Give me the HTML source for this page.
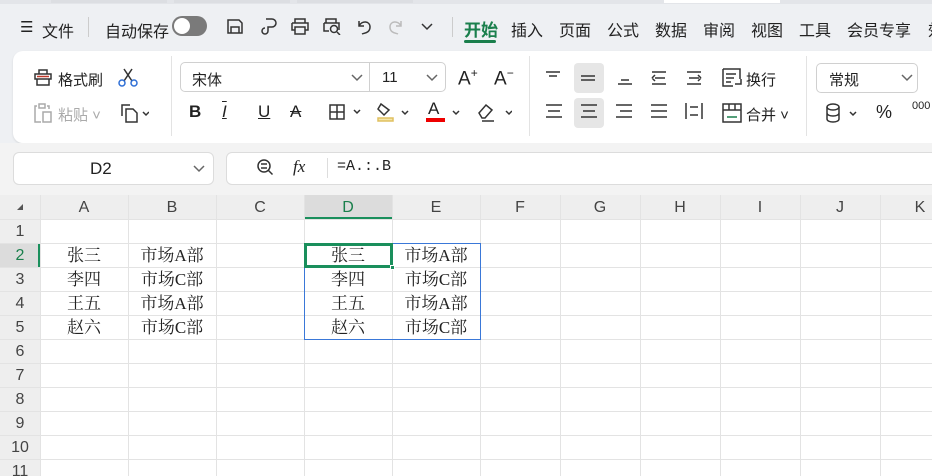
<!DOCTYPE html>
<html><head><meta charset="utf-8"><style>
*{box-sizing:border-box;margin:0;padding:0}
html,body{width:932px;height:476px;overflow:hidden}
body{background:#eef0f3;font-family:"Liberation Sans","Noto Sans CJK SC",sans-serif;position:relative;color:#222}
.a{position:absolute;white-space:nowrap}
.t{font-size:15px}
.ic{position:absolute;stroke:#333;fill:none;stroke-width:1.5}
.g{position:absolute;background:#e3e3e3}
.hd{position:absolute;top:195px;height:24px;line-height:25px;text-align:center;font-size:16px;color:#444}
.rh{position:absolute;left:0;width:40px;height:24px;line-height:25px;text-align:center;font-size:16px;color:#444}
.c{position:absolute;height:24px;line-height:25px;text-align:center;font-size:17px;font-family:"Liberation Serif","Noto Serif CJK SC",serif;color:#222}
</style></head><body>
<div class="a" style="left:0;top:0;width:932px;height:4px;background:#e3e5e9"></div>
<div class="a" style="left:51px;top:0;width:116px;height:3px;background:#dcdee2"></div>
<div class="a" style="left:174px;top:0;width:116px;height:3px;background:#dcdee2"></div>
<div class="a" style="left:297px;top:0;width:116px;height:3px;background:#dcdee2"></div>
<div class="a" style="left:664px;top:0;width:116px;height:3px;background:#fff"></div>
<div class="a t" style="left:20px;top:18px">☰</div>
<div class="a" style="left:42px;top:18px;font-size:16px">文件</div>
<div class="a" style="left:88px;top:17px;width:1px;height:20px;background:#ccc"></div>
<div class="a" style="left:105px;top:18px;font-size:16px">自动保存</div>
<div class="a" style="left:172px;top:16px;width:35px;height:20px;border-radius:10px;background:#7a7a7a"></div>
<div class="a" style="left:174px;top:18px;width:16px;height:16px;border-radius:8px;background:#fff"></div>
<svg class="ic" style="left:226px;top:17px" width="18" height="18"><path d="M2 3h11l3 3v10H2z M5 10h8v6H5z"/></svg>
<svg class="ic" style="left:260px;top:17px" width="18" height="18"><path d="M6 2h6a4 4 0 0 1 0 8H8v4a3 3 0 1 1-3-3"/></svg>
<svg class="ic" style="left:290px;top:17px" width="20" height="18"><path d="M5 6V2h10v4 M2 6h16v7h-3 M5 13H2V6 M5 10h10v7H5z"/></svg>
<svg class="ic" style="left:322px;top:17px" width="20" height="18"><path d="M4 6V2h10v4 M2 6h15v7 M2 6v8h5"/><circle cx="12" cy="12" r="3.5"/><path d="M15 15l3 3"/></svg>
<svg class="ic" style="left:356px;top:17px" width="16" height="18"><path d="M3 4v5h5 M3 9c3-6 11-5 11 1s-6 6-8 7"/></svg>
<svg class="ic" style="left:388px;top:17px;stroke:#bbb" width="16" height="18"><path d="M13 4v5H8 M13 9c-3-6-11-5-11 1s6 6 8 7"/></svg>
<svg class="ic" style="left:420px;top:22px" width="14" height="10"><path d="M2 2l5 5 5-5"/></svg>
<div class="a" style="left:452px;top:17px;width:1px;height:20px;background:#ccc"></div>
<div class="a" style="left:464px;top:16px;font-size:17px;font-weight:bold;color:#1a7f4c">开始</div>
<div class="a" style="left:464px;top:40px;width:32px;height:3px;background:#1a7f4c;border-radius:2px"></div>
<div class="a" style="left:511px;top:17px;font-size:16px">插入</div>
<div class="a" style="left:559px;top:17px;font-size:16px">页面</div>
<div class="a" style="left:607px;top:17px;font-size:16px">公式</div>
<div class="a" style="left:655px;top:17px;font-size:16px">数据</div>
<div class="a" style="left:703px;top:17px;font-size:16px">审阅</div>
<div class="a" style="left:751px;top:17px;font-size:16px">视图</div>
<div class="a" style="left:799px;top:17px;font-size:16px">工具</div>
<div class="a" style="left:847px;top:17px;font-size:16px">会员专享</div>
<div class="a" style="left:928px;top:17px;font-size:16px">效</div>
<div class="a" style="left:13px;top:51px;width:930px;height:92px;background:#fff;border-radius:10px;box-shadow:0 1px 2px rgba(0,0,0,.1)"></div>
<svg class="ic" style="left:33px;top:67px" width="20" height="20"><path d="M2 7h16v5H2z M6 7V3h8v4 M4 12v6h12v-6"/><path d="M4 9.5h12" stroke="#c0392b"/></svg>
<div class="a t" style="left:58px;top:69px">格式刷</div>
<svg class="ic" style="left:117px;top:66px;stroke:#2f6fd6" width="22" height="22"><path d="M7 3l8 12 M15 3L7 15" stroke="#333"/><circle cx="5" cy="17" r="3"/><circle cx="17" cy="17" r="3"/></svg>
<svg class="ic" style="left:33px;top:102px;stroke:#aaa" width="20" height="22"><path d="M4 4H2v16h6 M14 4h2v3 M6 2h6v4H6z M10 10h8v10h-8z"/></svg>
<div class="a t" style="left:58px;top:104px;color:#aaa">粘贴 ˅</div>
<svg class="ic" style="left:119px;top:102px" width="30" height="22"><path d="M3 14V3h8 M7 7h7l4 4v9H7z"/><path d="M24 10l3 3 3-3"/></svg>
<div class="a" style="left:171px;top:56px;width:1px;height:80px;background:#e3e3e3"></div>
<div class="a" style="left:180px;top:62px;width:266px;height:30px;border:1px solid #d0d0d0;border-radius:5px"></div>
<div class="a" style="left:369px;top:63px;width:1px;height:28px;background:#d0d0d0"></div>
<div class="a t" style="left:192px;top:69px">宋体</div>
<svg class="ic" style="left:350px;top:73px;stroke:#666" width="14" height="10"><path d="M2 2l5 5 5-5"/></svg>
<div class="a t" style="left:382px;top:69px">11</div>
<svg class="ic" style="left:425px;top:73px;stroke:#666" width="14" height="10"><path d="M2 2l5 5 5-5"/></svg>
<div class="a" style="left:458px;top:66px;font-size:19px">A<sup style="font-size:12px">+</sup></div>
<div class="a" style="left:494px;top:66px;font-size:19px">A<sup style="font-size:12px">−</sup></div>
<div class="a" style="left:189px;top:102px;font-size:17px;font-weight:bold">B</div>
<div class="a" style="left:222px;top:102px;font-size:17px;font-style:italic;text-decoration:underline overline">I</div>
<div class="a" style="left:258px;top:102px;font-size:17px;text-decoration:underline">U</div>
<div class="a" style="left:290px;top:102px;font-size:17px;text-decoration:line-through">A</div>
<svg class="ic" style="left:328px;top:103px" width="34" height="18"><path d="M2 2h14v14H2z M9 2v14 M2 9h14"/><path d="M26 7l3 3 3-3"/></svg>
<svg class="ic" style="left:376px;top:101px" width="36" height="22"><path d="M5 3l8 6-5 5-6-6z"/><path d="M2 17h15v3H2z" fill="#f5e6a8" stroke="#e0c060"/><path d="M26 10l3 3 3-3"/></svg>
<div class="a" style="left:428px;top:99px;font-size:17px">A</div>
<div class="a" style="left:426px;top:118px;width:19px;height:4px;background:#e00"></div>
<svg class="ic" style="left:452px;top:110px" width="10" height="8"><path d="M1 1l3 3 3-3"/></svg>
<svg class="ic" style="left:476px;top:101px" width="36" height="22"><path d="M3 12l7-8 6 5-7 8H6z M6 20h12"/><path d="M30 10l3 3 3-3"/></svg>
<div class="a" style="left:529px;top:56px;width:1px;height:80px;background:#e3e3e3"></div>
<div class="a" style="left:574px;top:63px;width:30px;height:30px;background:#e6e6e6;border-radius:4px"></div>
<div class="a" style="left:574px;top:98px;width:30px;height:30px;background:#e6e6e6;border-radius:4px"></div>
<svg class="ic" style="left:544px;top:68px" width="200" height="60"><path d="M2 4h14 M5 8h8 M37 8h14 M37 12h14 M74 16h14 M77 12h8 M108 4h14 M108 16h14 M111 10h10 M108 10l3-3 M108 10l3 3 M143 4h14 M143 16h14 M145 10h10 M157 10l-3-3 M157 10l-3 3"/><path d="M2 37h16 M4 43h12 M2 49h16 M37 37h16 M39 43h12 M37 49h16 M72 37h16 M76 43h12 M72 49h16 M107 37h16 M107 43h16 M107 49h16 M142 35v16 M158 35v16 M146 39h8 M146 47h8"/></svg>
<svg class="ic" style="left:721px;top:67px" width="22" height="22"><path d="M2 2h17v10 M2 2v17h10 M5 7h10 M5 11h8 M5 15h5 M14 17h6v-5" /></svg>
<div class="a t" style="left:746px;top:69px">换行</div>
<svg class="ic" style="left:721px;top:102px" width="22" height="22"><path d="M2 2h18v18H2z M2 8h18 M8 2v6 M14 2v6"/><path d="M6 15h10" stroke="#1a7f4c"/></svg>
<div class="a t" style="left:746px;top:104px">合并 ˅</div>
<div class="a" style="left:806px;top:56px;width:1px;height:80px;background:#e3e3e3"></div>
<div class="a" style="left:816px;top:63px;width:102px;height:30px;border:1px solid #d0d0d0;border-radius:5px"></div>
<div class="a t" style="left:829px;top:69px">常规</div>
<svg class="ic" style="left:900px;top:73px;stroke:#666" width="14" height="10"><path d="M2 2l5 5 5-5"/></svg>
<svg class="ic" style="left:824px;top:102px" width="36" height="22"><ellipse cx="9" cy="5" rx="6" ry="3"/><path d="M3 5v12c0 4 12 4 12 0V5 M3 11c0 4 12 4 12 0"/><path d="M26 10l3 3 3-3"/></svg>
<div class="a" style="left:876px;top:102px;font-size:18px">%</div>
<div class="a" style="left:912px;top:100px;font-size:11px">000</div>
<div class="a" style="left:0;top:143px;width:932px;height:52px;background:#f3f3f3"></div>
<div class="a" style="left:13px;top:152px;width:201px;height:33px;background:#fff;border:1px solid #dcdcdc;border-radius:6px"></div>
<div class="a" style="left:90px;top:159px;font-size:17px">D2</div>
<svg class="ic" style="left:192px;top:164px;stroke:#666" width="14" height="10"><path d="M2 2l5 5 5-5"/></svg>
<div class="a" style="left:226px;top:152px;width:720px;height:33px;background:#fff;border:1px solid #dcdcdc;border-radius:6px"></div>
<svg class="ic" style="left:256px;top:158px" width="20" height="20"><circle cx="8" cy="8" r="6"/><path d="M12.5 12.5l4 4 M5 6h6 M5 10h6"/></svg>
<div class="a" style="left:293px;top:157px;font-size:17px;font-style:italic;font-family:'Liberation Serif',serif">fx</div>
<div class="a" style="left:327px;top:158px;width:1px;height:20px;background:#ddd"></div>
<div class="a" style="left:337px;top:158px;font-size:15px;font-family:'Liberation Mono',monospace">=A.:.B</div>
<div class="a" style="left:0;top:195px;width:932px;height:281px;background:#fff"></div>
<div class="a" style="left:0;top:195px;width:932px;height:24px;background:#eeeeee"></div>
<div class="a" style="left:0;top:195px;width:40px;height:281px;background:#eeeeee"></div>
<div class="a" style="left:304px;top:195px;width:88px;height:24px;background:#dcdcdc;border-bottom:2px solid #1a8f5c"></div>
<div class="a" style="left:0;top:243px;width:40px;height:24px;background:#dcdcdc;border-right:2px solid #1a8f5c"></div>
<div class="g" style="left:40px;top:195px;width:1px;height:281px"></div>
<div class="g" style="left:128px;top:195px;width:1px;height:281px"></div>
<div class="g" style="left:216px;top:195px;width:1px;height:281px"></div>
<div class="g" style="left:304px;top:195px;width:1px;height:281px"></div>
<div class="g" style="left:392px;top:195px;width:1px;height:281px"></div>
<div class="g" style="left:480px;top:195px;width:1px;height:281px"></div>
<div class="g" style="left:560px;top:195px;width:1px;height:281px"></div>
<div class="g" style="left:640px;top:195px;width:1px;height:281px"></div>
<div class="g" style="left:720px;top:195px;width:1px;height:281px"></div>
<div class="g" style="left:800px;top:195px;width:1px;height:281px"></div>
<div class="g" style="left:880px;top:195px;width:1px;height:281px"></div>
<div class="g" style="left:0;top:219px;width:932px;height:1px"></div>
<div class="g" style="left:0;top:243px;width:932px;height:1px"></div>
<div class="g" style="left:0;top:267px;width:932px;height:1px"></div>
<div class="g" style="left:0;top:291px;width:932px;height:1px"></div>
<div class="g" style="left:0;top:315px;width:932px;height:1px"></div>
<div class="g" style="left:0;top:339px;width:932px;height:1px"></div>
<div class="g" style="left:0;top:363px;width:932px;height:1px"></div>
<div class="g" style="left:0;top:387px;width:932px;height:1px"></div>
<div class="g" style="left:0;top:411px;width:932px;height:1px"></div>
<div class="g" style="left:0;top:435px;width:932px;height:1px"></div>
<div class="g" style="left:0;top:459px;width:932px;height:1px"></div>
<svg class="a" style="left:15px;top:202px" width="10" height="10"><path d="M8 2v6H2z" fill="#555"/></svg>
<div class="hd" style="left:40px;width:88px">A</div>
<div class="hd" style="left:128px;width:88px">B</div>
<div class="hd" style="left:216px;width:88px">C</div>
<div class="hd" style="left:304px;width:88px;color:#1a7f4c">D</div>
<div class="hd" style="left:392px;width:88px">E</div>
<div class="hd" style="left:480px;width:80px">F</div>
<div class="hd" style="left:560px;width:80px">G</div>
<div class="hd" style="left:640px;width:80px">H</div>
<div class="hd" style="left:720px;width:80px">I</div>
<div class="hd" style="left:800px;width:80px">J</div>
<div class="hd" style="left:880px;width:80px">K</div>
<div class="rh" style="top:219px">1</div>
<div class="rh" style="top:243px;color:#1a7f4c">2</div>
<div class="rh" style="top:267px">3</div>
<div class="rh" style="top:291px">4</div>
<div class="rh" style="top:315px">5</div>
<div class="rh" style="top:339px">6</div>
<div class="rh" style="top:363px">7</div>
<div class="rh" style="top:387px">8</div>
<div class="rh" style="top:411px">9</div>
<div class="rh" style="top:435px">10</div>
<div class="rh" style="top:459px">11</div>
<div class="c" style="left:40px;top:243px;width:88px">张三</div>
<div class="c" style="left:40px;top:267px;width:88px">李四</div>
<div class="c" style="left:40px;top:291px;width:88px">王五</div>
<div class="c" style="left:40px;top:315px;width:88px">赵六</div>
<div class="c" style="left:128px;top:243px;width:88px">市场A部</div>
<div class="c" style="left:128px;top:267px;width:88px">市场C部</div>
<div class="c" style="left:128px;top:291px;width:88px">市场A部</div>
<div class="c" style="left:128px;top:315px;width:88px">市场C部</div>
<div class="c" style="left:304px;top:243px;width:88px">张三</div>
<div class="c" style="left:304px;top:267px;width:88px">李四</div>
<div class="c" style="left:304px;top:291px;width:88px">王五</div>
<div class="c" style="left:304px;top:315px;width:88px">赵六</div>
<div class="c" style="left:392px;top:243px;width:88px">市场A部</div>
<div class="c" style="left:392px;top:267px;width:88px">市场C部</div>
<div class="c" style="left:392px;top:291px;width:88px">市场A部</div>
<div class="c" style="left:392px;top:315px;width:88px">市场C部</div>
<div class="a" style="left:304px;top:243px;width:177px;height:97px;border:1px solid #3a78d8"></div>
<div class="a" style="left:304px;top:243px;width:89px;height:25px;border:3px solid #1a8f5c"></div>
<div class="a" style="left:390px;top:265px;width:5px;height:5px;background:#1a8f5c;border:1px solid #fff"></div>
</body></html>
